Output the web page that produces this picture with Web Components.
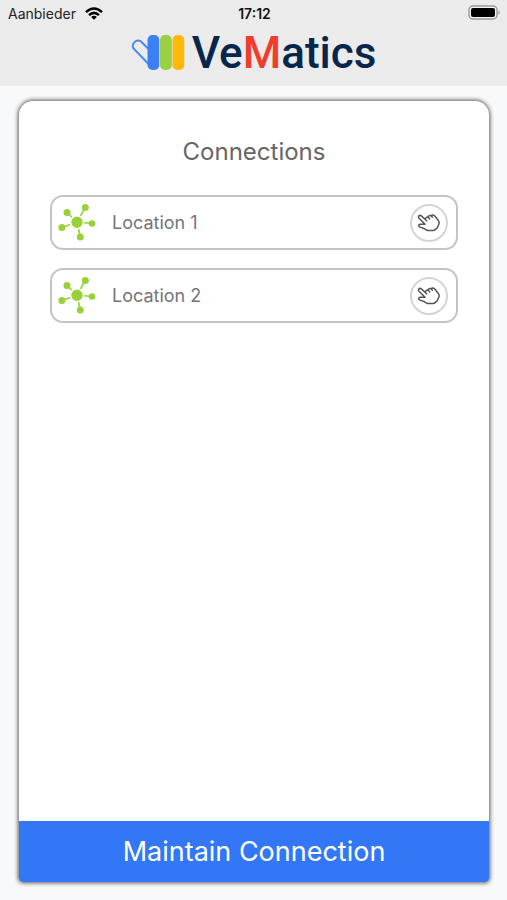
<!DOCTYPE html>
<html lang="en">
<head>
<meta charset="utf-8">
<meta name="viewport" content="width=device-width, initial-scale=1">
<title>VeMatics – Connections</title>
<style>
html, body { height: 100%; margin: 0; }
body { background: #f7f9fb; font-family: Inter, "Liberation Sans", sans-serif; color: #666; }
</style>
</head>
<body>
<vm-app>
  <vm-status slot="header" carrier="Aanbieder" time="17:12"></vm-status>
  <vm-logo slot="header"></vm-logo>
  <vm-card heading="Connections" action="Maintain Connection">
    <vm-connection>Location 1</vm-connection>
    <vm-connection>Location 2</vm-connection>
  </vm-card>
</vm-app>
<script>
class VmElement extends HTMLElement {
  constructor() {
    super();
    this.attachShadow({ mode: 'open' });
  }
  connectedCallback() {
    this.shadowRoot.innerHTML = this.render();
  }
}

customElements.define('vm-app', class extends VmElement {
  render() {
    return `<style>
      :host { display: flex; flex-direction: column; min-height: 100vh; }
      header { background: #ebebeb; padding-bottom: 9px; }
      main { flex: 1; display: flex; padding: 15px 18px 18px 19px; }
      ::slotted(vm-card) { flex: 1; }
    </style>
    <header><slot name="header"></slot></header>
    <main><slot></slot></main>`;
  }
});

customElements.define('vm-status', class extends VmElement {
  render() {
    return `<style>
      :host { display: grid; grid-template-columns: 1fr auto 1fr; align-items: center;
        height: 26px; padding: 0 6px 0 8px; font-size: 14px; color: #222; }
      .left { display: flex; align-items: center; gap: 9px; }
      .time { font-weight: 600; color: #111; }
      .battery { justify-self: end; display: block; }
      svg { display: block; }
    </style>
    <span class="left"><span>${this.getAttribute('carrier')}</span>
      <svg width="18" height="13" viewBox="0 0 18 13" fill="none" stroke="#000" stroke-width="2.5" aria-label="Wi-Fi">
        <path d="M1 5.2Q9-2.3 17 5.2M4 8.2Q9 3.6 14 8.2"/><path d="M9 12.8L6.1 10Q9 7.6 11.9 10Z" fill="#000" stroke="none"/>
      </svg></span>
    <span class="time">${this.getAttribute('time')}</span>
    <svg class="battery" width="33" height="16" viewBox="0 0 33 16" aria-label="Battery">
      <rect x="1" y="1" width="28" height="13" rx="4" fill="#f4f4f4" stroke="#999" stroke-width="1.4"/>
      <rect x="3" y="3" width="24" height="9" rx="2" fill="#000"/>
      <path d="M30.5 5Q33 7.5 30.5 10Z" fill="#999"/>
    </svg>`;
  }
});

customElements.define('vm-logo', class extends VmElement {
  render() {
    return `<style>
      :host { display: flex; justify-content: center; align-items: center; gap: 7px;
        height: 49px; padding-top: 2px; color: #07264b; }
      svg { display: block; }
      .word { font: 500 44px/48px Roboto, "Liberation Sans", sans-serif; }
      .accent { color: #f23c2b; }
    </style>
    <svg width="54" height="37" viewBox="0 0 54 37" aria-hidden="true">
      <path d="M18 30.500L2.500 14.500A5.300 5.300 0 0 1 10 7.500L18 15.500" fill="none" stroke="#4584f4" stroke-width="1.800"/>
      <rect x="16.500" y="1" width="11.800" height="35" rx="5" fill="#3d80f5"/>
      <rect x="29" y="1" width="11.800" height="35" rx="5" fill="#99cf42"/>
      <rect x="41.500" y="1" width="11.800" height="35" rx="5" fill="#ffb90b"/>
    </svg>
    <span class="word">Ve<span class="accent">M</span>atics</span>`;
  }
});

customElements.define('vm-card', class extends VmElement {
  render() {
    return `<style>
      :host { display: flex; flex-direction: column; overflow: hidden; background: #fff;
        border-radius: 14px 14px 4px 4px; box-shadow: 0 0 4px 1px rgba(0,0,0,.65); }
      h1 { margin: 35px 0 28px; font-size: 24px; line-height: 31px; font-weight: 400; text-align: center; }
      .list { flex: 1; display: flex; flex-direction: column; gap: 18px; padding: 0 31px; }
      button { height: 61px; border: 0; background: #3377f6; color: #fff;
        font: 400 27px/32px Inter, "Liberation Sans", sans-serif; cursor: pointer; }
    </style>
    <h1>${this.getAttribute('heading')}</h1>
    <div class="list"><slot></slot></div>
    <button type="button">${this.getAttribute('action')}</button>`;
  }
});

customElements.define('vm-connection', class extends VmElement {
  render() {
    return `<style>
      :host { display: flex; align-items: center; box-sizing: border-box; height: 55px;
        padding: 0 8px 0 6px; border: 2px solid #c4c4c4; border-radius: 13px;
        font-size: 18px; color: #757575; }
      svg { display: block; flex: none; }
      .label { flex: 1; margin-left: 16px; }
      button { display: flex; align-items: center; justify-content: center; box-sizing: border-box;
        width: 38px; height: 38px; padding: 0; border: 2px solid #d4d4d4; border-radius: 50%;
        background: #fff; cursor: pointer; }
    </style>
    <svg width="38" height="38" viewBox="0 0 38 38" fill="#99d138" stroke="#99d138" aria-hidden="true">
      <g stroke-width="1.600">
        <path d="M19 18L27.300 3.500M19 18L9 8.500M19 18L4 23.500M19 18L22.300 33M19 18L34 19.500"/>
      </g>
      <circle cx="19" cy="18.200" r="6.500" stroke="#fff" stroke-width="1.600"/>
      <g stroke="none">
        <circle cx="27.300" cy="3.600" r="3.500"/><circle cx="9" cy="8.600" r="3.500"/>
        <circle cx="3.900" cy="23.500" r="3.500"/><circle cx="22.300" cy="33" r="3.500"/>
        <circle cx="34" cy="19.500" r="3.300"/>
      </g>
    </svg>
    <span class="label"><slot></slot></span>
    <button type="button" aria-label="Select connection">
      <svg width="24" height="20" viewBox="0 0 24 20" fill="none" stroke="#555" stroke-width="1.500" stroke-linecap="round" stroke-linejoin="round">
        <path d="M8.300 6.500L4.300 2.900C2.400 1.500.600 3.500 2 5.200L8 11.200L3.200 11.300C1.300 11.500 1.300 13.500 3 14.100L7.600 15.800L10.500 17.600L16.200 17.600C17.800 17.600 18.800 15.600 20.300 14.800L22.100 10.500C22.400 9 21.900 8.100 21 7L17.800 3C16.800 1.900 15.200 1.700 14 2.700C12.700 2.200 11.400 2.800 11 4.100C9.600 3.900 8.400 4.900 8.300 6.500L9.800 8M11 4.100L12.700 6M14 2.700L15.400 4.300"/>
      </svg>
    </button>`;
  }
});
</script>
</body>
</html>
